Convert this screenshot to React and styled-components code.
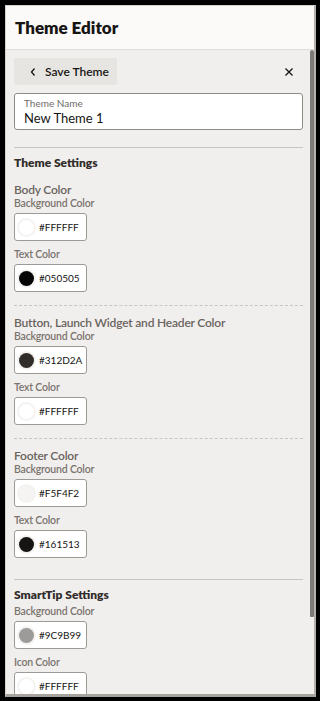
import styled, { createGlobalStyle } from "styled-components";

const Global = createGlobalStyle`
    html, body {
        margin: 0;
        background: #000;
        height: 701px;
        overflow: hidden;
        font-family: Lato, "Noto Sans", sans-serif;
    }
`;

const Frame = styled.div`
    padding: 5px 4px 4px 5px;
    height: 701px;
    box-sizing: border-box;
    display: flex;
`;

const Panel = styled.div`
    flex: 1;
    display: flex;
    flex-direction: column;
    background: #f1efed;
    border-top: 1px solid #d6d3cf;
    border-left: 1px solid #d6d3cf;
    border-right: 2px solid #b3b0ac;
    border-bottom: 3px solid #a6a39f;
    overflow: hidden;
`;

const Header = styled.div`
    height: 43px;
    flex: none;
    display: flex;
    align-items: center;
    padding-left: 9px;
    background: #fbfaf8;
    border-bottom: 1px solid #e1deda;
`;

const Title = styled.h1`
    margin: 0;
    font-size: 17px;
    font-weight: 800;
    color: #161513;
`;

const Scroller = styled.div`
    flex: 1;
    display: flex;
    min-height: 0;
`;

const Body = styled.div`
    flex: 1;
    overflow: hidden;
    padding: 8px 7px 0 8px;
`;

const ScrollTrack = styled.div`
    width: 4px;
    flex: none;
`;

const ScrollThumb = styled.div`
    height: 88%;
    background: #7d7a77;
    border-radius: 2px 2px 1px 1px;
`;

const Toolbar = styled.div`
    display: flex;
    align-items: center;
    justify-content: space-between;
`;

const BackButton = styled.button`
    display: flex;
    align-items: center;
    gap: 8px;
    height: 27px;
    width: 103px;
    padding: 0 0 0 15px;
    border: none;
    border-radius: 2px;
    background: #e7e5e2;
    font-family: inherit;
    font-size: 12px;
    font-weight: 600;
    color: #161513;
`;

const CloseButton = styled.button`
    display: flex;
    border: none;
    background: none;
    padding: 0;
    margin-right: 9px;
`;

const InputBox = styled.div`
    margin-top: 8px;
    height: 37px;
    box-sizing: border-box;
    border: 1px solid #8f8b87;
    border-radius: 3px;
    background: #fff;
    padding: 3px 9px 0;
`;

const InputLabel = styled.div`
    font-size: 10px;
    line-height: 13px;
    color: #6f6b67;
`;

const InputValue = styled.div`
    font-size: 13px;
    line-height: 17px;
    color: #161513;
`;

const Divider = styled.hr`
    margin: ${(p) => p.$mt}px 0 0;
    border: none;
    border-top: 1px ${(p) => (p.$dashed ? "dashed" : "solid")} #c9c6c2;
`;

const SettingsTitle = styled.h2`
    margin: 7px 0 0;
    font-size: 12px;
    line-height: 16px;
    font-weight: 800;
    color: #312d2a;
`;

const GroupTitle = styled.h3`
    margin: ${(p) => p.$mt}px 0 0;
    font-size: 12px;
    letter-spacing: -0.2px;
    line-height: 15px;
    font-weight: 600;
    color: #6a635e;
`;

const FieldLabel = styled.div`
    margin-top: ${(p) => p.$mt}px;
    font-size: 10.5px;
    letter-spacing: -0.2px;
    line-height: 12px;
    font-weight: 600;
    color: #7a736e;
`;

const Swatch = styled.div`
    margin-top: 4px;
    width: 73px;
    height: 28px;
    box-sizing: border-box;
    display: flex;
    align-items: center;
    gap: 5px;
    padding-left: 4px;
    border: 1px solid #9d9995;
    border-radius: 3px;
    background: #fff;
    font-size: 10px;
    color: #161513;
`;

const Dot = styled.span`
    width: 15px;
    height: 15px;
    border-radius: 50%;
    background: ${(p) => p.$color};
    box-shadow: 0 0 0 2px #f4f3f1;
`;

function ColorField({ label, value, mt }) {
    return (
        <>
            <FieldLabel $mt={mt}>{label}</FieldLabel>
            <Swatch>
                <Dot $color={value} />
                {value}
            </Swatch>
        </>
    );
}

export default function App() {
    return (
        <Frame>
            <Global />
            <Panel>
                <Header>
                    <Title>Theme Editor</Title>
                </Header>
                <Scroller>
                    <Body>
                        <Toolbar>
                            <BackButton>
                                <svg width="8" height="10" viewBox="0 0 8 10">
                                    <path d="M5.5 1.5 L2.5 5 L5.5 8.5" fill="none" stroke="#161513" strokeWidth="1.3" />
                                </svg>
                                Save Theme
                            </BackButton>
                            <CloseButton>
                                <svg width="10" height="10" viewBox="0 0 10 10">
                                    <path d="M1.5 1.5 L8.5 8.5 M8.5 1.5 L1.5 8.5" stroke="#161513" strokeWidth="1.3" />
                                </svg>
                            </CloseButton>
                        </Toolbar>

                        <InputBox>
                            <InputLabel>Theme Name</InputLabel>
                            <InputValue>New Theme 1</InputValue>
                        </InputBox>

                        <Divider $mt={17} />
                        <SettingsTitle>Theme Settings</SettingsTitle>

                        <GroupTitle $mt={11}>Body Color</GroupTitle>
                        <ColorField label="Background Color" value="#FFFFFF" mt={0} />
                        <ColorField label="Text Color" value="#050505" mt={7} />

                        <Divider $dashed $mt={13} />
                        <GroupTitle $mt={9}>Button, Launch Widget and Header Color</GroupTitle>
                        <ColorField label="Background Color" value="#312D2A" mt={0} />
                        <ColorField label="Text Color" value="#FFFFFF" mt={7} />

                        <Divider $dashed $mt={13} />
                        <GroupTitle $mt={9}>Footer Color</GroupTitle>
                        <ColorField label="Background Color" value="#F5F4F2" mt={0} />
                        <ColorField label="Text Color" value="#161513" mt={7} />

                        <Divider $mt={21} />
                        <SettingsTitle>SmartTip Settings</SettingsTitle>
                        <ColorField label="Background Color" value="#9C9B99" mt={2} />
                        <ColorField label="Icon Color" value="#FFFFFF" mt={7} />
                    </Body>
                    <ScrollTrack>
                        <ScrollThumb />
                    </ScrollTrack>
                </Scroller>
            </Panel>
        </Frame>
    );
}
